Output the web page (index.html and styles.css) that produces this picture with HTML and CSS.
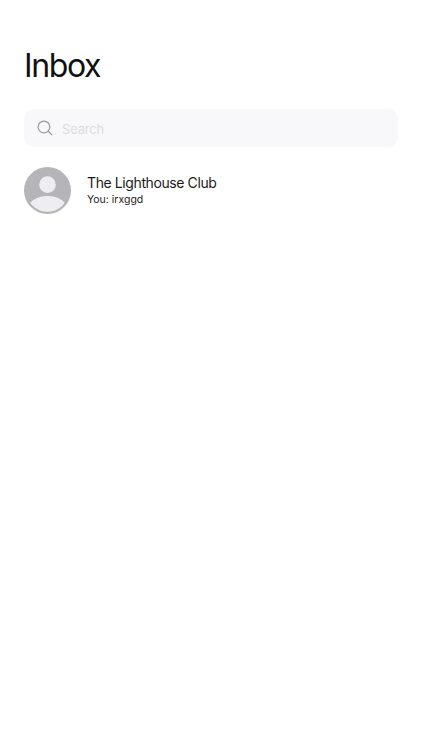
FILE: index.html
```html
<!DOCTYPE html>
<html lang="en">
<head>
  <meta charset="UTF-8">
  <meta name="viewport" content="width=device-width, initial-scale=1.0">
  <title>Inbox</title>
  <link rel="stylesheet" href="styles.css">
</head>
<body>
  <div class="container">
    <h1>Inbox</h1>

    <div class="search">
      <svg class="search-icon" width="16" height="16" viewBox="0 0 18 18" fill="none" stroke="#9a9a9f" stroke-width="1.4" stroke-linecap="round">
        <circle cx="7.8" cy="7.8" r="6.6"/>
        <path d="M12.6 12.6 L16.8 16.8"/>
      </svg>
      <span class="search-text">Search</span>
    </div>

    <div class="thread">
      <svg class="avatar" width="47" height="47" viewBox="0 0 48 48">
        <defs>
          <clipPath id="avatar-clip"><circle cx="24" cy="24" r="21.8"/></clipPath>
        </defs>
        <circle cx="24" cy="24" r="24" fill="#b4b4b9"/>
        <circle cx="24" cy="18" r="8.5" fill="#eeeef0"/>
        <ellipse cx="24" cy="45" rx="21" ry="15.5" fill="#eeeef0" clip-path="url(#avatar-clip)"/>
      </svg>
      <div class="thread-info">
        <div class="thread-name">The Lighthouse Club</div>
        <div class="thread-last">You: irxggd</div>
      </div>
    </div>
  </div>
</body>
</html>
```

FILE: styles.css
```css
body {
  font-family: 'Inter', sans-serif;
  margin: 0;
  padding: 0;
  background: #fff;
  color: #111;
  height: 100vh;
}

.container {
  padding: 46px 24px 0;
}

h1 {
  font-size: 32px;
  line-height: 40px;
  font-weight: 400;
  letter-spacing: -1.4px;
  margin: 0 0 23px;
}

.search {
  display: flex;
  align-items: center;
  gap: 9px;
  width: 374px;
  height: 38px;
  background: #f8f8fa;
  border-radius: 10px;
  padding-left: 13px;
  box-sizing: border-box;
}

.search-icon {
  flex: none;
}

.search-text {
  font-size: 13px;
  line-height: 16px;
  letter-spacing: -0.2px;
  padding-top: 2px;
  color: #dcdce0;
}

.thread {
  display: flex;
  align-items: center;
  gap: 16px;
  margin-top: 20px;
}

.avatar {
  flex: none;
}

.thread-name {
  font-size: 14px;
  line-height: 18px;
  letter-spacing: -0.4px;
  color: #1a1a1a;
}

.thread-last {
  font-size: 10.5px;
  line-height: 14px;
  margin-top: 1px;
  color: #222;
}
```
